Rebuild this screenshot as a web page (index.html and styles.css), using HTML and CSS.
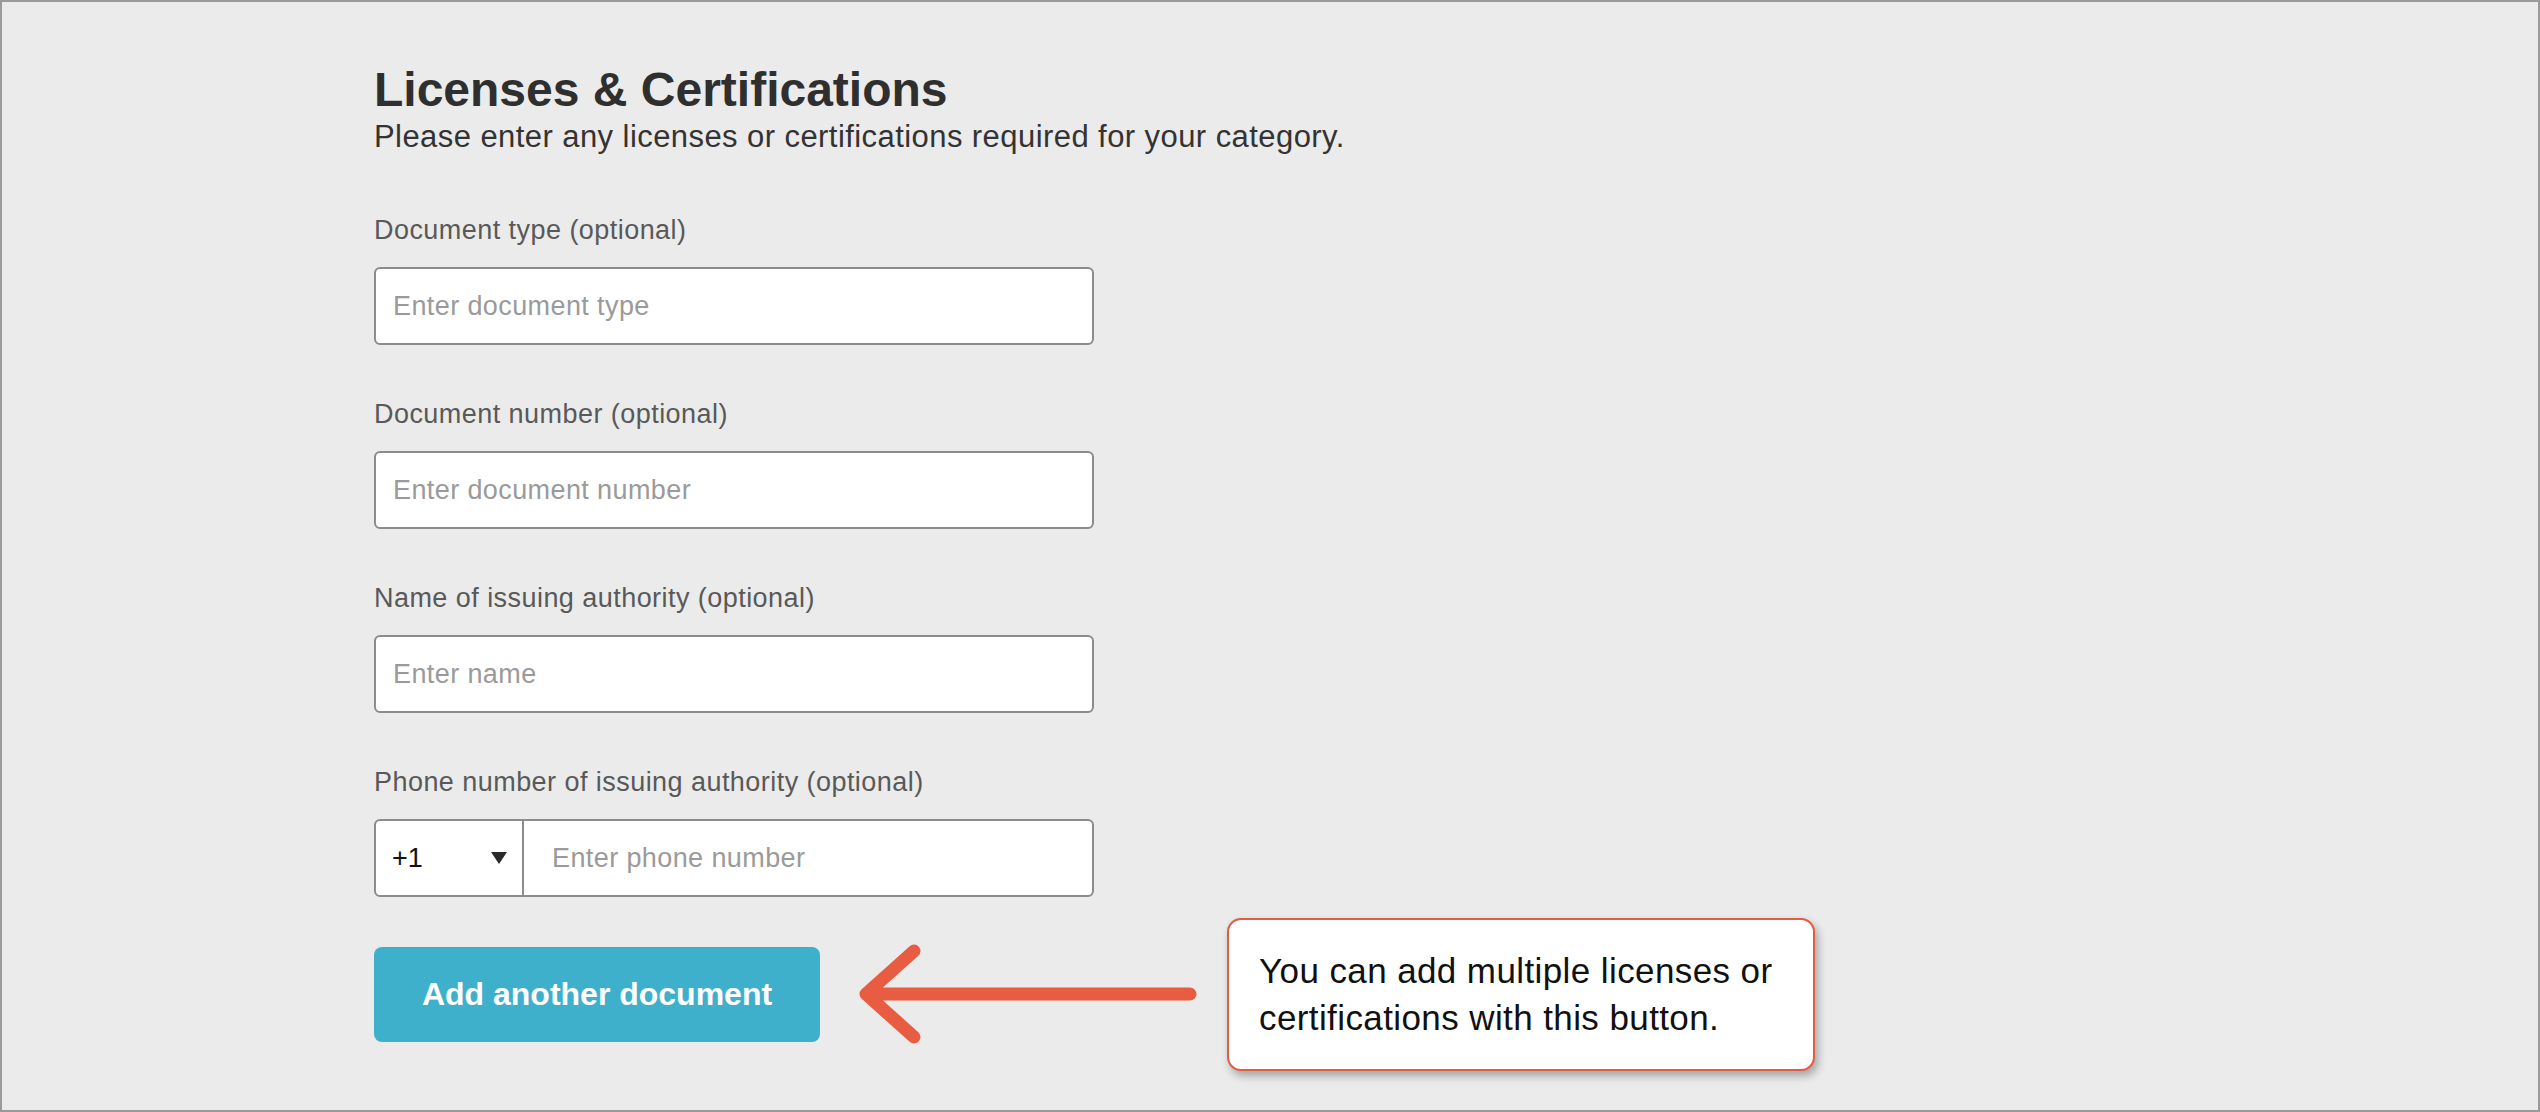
FILE: index.html
```html
<!DOCTYPE html>
<html lang="en">
<head>
<meta charset="utf-8">
<title>Licenses &amp; Certifications</title>
<link rel="stylesheet" href="styles.css">
</head>
<body>
<div class="frame">
  <div class="form">
    <h1 class="title">Licenses &amp; Certifications</h1>
    <p class="subtitle">Please enter any licenses or certifications required for your category.</p>

    <div class="field">
      <label class="label">Document type (optional)</label>
      <input class="text-input" type="text" placeholder="Enter document type">
    </div>
    <div class="field">
      <label class="label">Document number (optional)</label>
      <input class="text-input" type="text" placeholder="Enter document number">
    </div>
    <div class="field">
      <label class="label">Name of issuing authority (optional)</label>
      <input class="text-input" type="text" placeholder="Enter name">
    </div>
    <div class="field">
      <label class="label">Phone number of issuing authority (optional)</label>
      <div class="phone">
        <div class="code"><span>+1</span><span class="caret"></span></div>
        <input class="phone-input" type="text" placeholder="Enter phone number">
      </div>
    </div>

    <div class="action-row">
      <button class="add-btn" type="button">Add another document</button>
      <svg class="arrow" width="352" height="112" viewBox="0 0 352 112" aria-hidden="true">
        <path d="M62 12 L14 55 L62 98 M14 55 L338 55" fill="none" stroke="#e85d42" stroke-width="13" stroke-linecap="round" stroke-linejoin="round"/>
      </svg>
      <div class="callout">You can add multiple licenses or<br>certifications with this button.</div>
    </div>
  </div>
</div>
</body>
</html>
```

FILE: styles.css
```css
* { box-sizing: border-box; }
html, body { margin: 0; padding: 0; }
body {
  font-family: "Liberation Sans", Arial, Helvetica, sans-serif;
  background: #ebebeb;
}
.frame {
  width: 2540px;
  height: 1112px;
  border: 2px solid #9a9a9a;
  background: #ebebeb;
  padding: 60px 0 0 372px;
  overflow: hidden;
}
.form {
  display: flex;
  flex-direction: column;
  width: 1500px;
}
.title {
  margin: 0;
  font-size: 48px;
  line-height: 55px;
  font-weight: 700;
  color: #2f2f2f;
}
.subtitle {
  margin: 2px 0 0 0;
  font-size: 31px;
  line-height: 36px;
  letter-spacing: 0.43px;
  color: #333;
}
.field {
  display: flex;
  flex-direction: column;
  margin-top: 54px;
}
.form .subtitle + .field { margin-top: 60px; }
.label {
  font-size: 27px;
  line-height: 30px;
  letter-spacing: 0.45px;
  color: #595959;
  margin-bottom: 22px;
}
.text-input {
  width: 720px;
  height: 78px;
  border: 2px solid #8c8c8c;
  border-radius: 6px;
  background: #fff;
  padding: 0 0 0 17px;
  font-family: inherit;
  font-size: 27px;
  letter-spacing: 0.4px;
  color: #222;
  outline: none;
}
.text-input::placeholder, .phone-input::placeholder { color: #9a9a9a; }
.phone {
  width: 720px;
  height: 78px;
  border: 2px solid #8c8c8c;
  border-radius: 6px;
  background: #fff;
  display: flex;
  align-items: stretch;
  overflow: hidden;
}
.code {
  width: 148px;
  border-right: 2px solid #8c8c8c;
  display: flex;
  align-items: center;
  justify-content: space-between;
  padding: 0 15px 0 16px;
  font-size: 27px;
  color: #111;
}
.caret {
  width: 0;
  height: 0;
  border-left: 8.5px solid transparent;
  border-right: 8.5px solid transparent;
  border-top: 12px solid #2a2a2a;
}
.phone-input {
  flex: 1;
  border: none;
  outline: none;
  background: transparent;
  padding: 0 0 0 28px;
  font-family: inherit;
  font-size: 27px;
  letter-spacing: 0.4px;
  color: #222;
}
.action-row {
  display: flex;
  align-items: center;
  margin-top: 21px;
}
.add-btn {
  width: 446px;
  height: 95px;
  border: none;
  border-radius: 8px;
  background: #3fb0cc;
  color: #fff;
  font-family: inherit;
  font-size: 32px;
  font-weight: 700;
  padding: 0;
}
.arrow {
  display: block;
  margin-left: 32px;
  flex: none;
}
.callout {
  margin-left: 23px;
  width: 588px;
  height: 153px;
  border: 2px solid #e55b3f;
  border-radius: 14px;
  background: #fff;
  box-shadow: 3px 5px 8px rgba(0, 0, 0, 0.3);
  padding: 27px 10px 0 30px;
  font-size: 35px;
  line-height: 47px;
  letter-spacing: 0.4px;
  color: #111;
}
```
